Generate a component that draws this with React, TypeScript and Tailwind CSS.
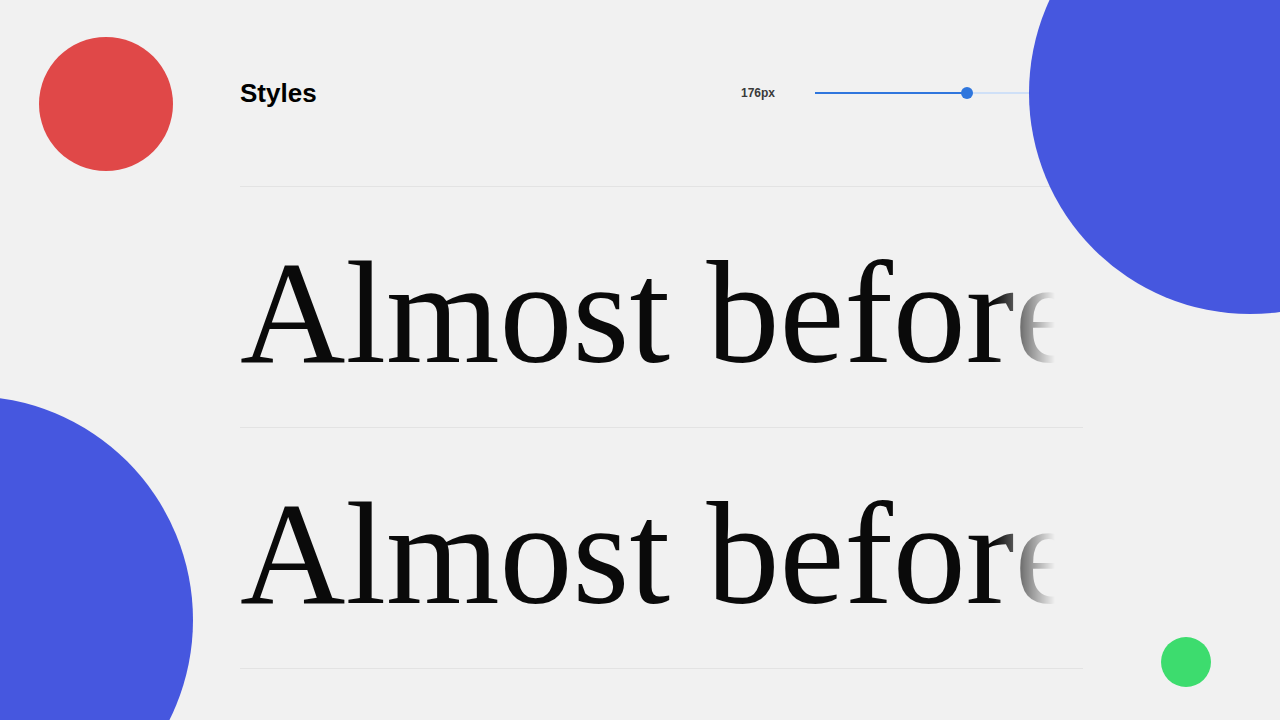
import React from 'react'

const serif = { fontFamily: '"Liberation Serif", "DejaVu Serif", serif' }

function Slider({ value }: { value: number }) {
  // value is a 0..1 fraction of the track
  return (
    <div className="relative h-[2px] w-[268px] bg-[#cfe0f7]">
      <div className="absolute left-0 top-0 h-[2px] bg-[#2f76dd]" style={{ width: `${value * 100}%` }} />
      <div
        className="absolute top-1/2 h-3 w-3 -translate-x-1/2 -translate-y-1/2 rounded-full bg-[#2f76dd]"
        style={{ left: `${value * 100}%` }}
      />
    </div>
  )
}

function SampleRow({ text }: { text: string }) {
  return (
    <div className="h-[241px] border-b border-[#e3e3e3] pt-[53px]">
      <div
        className="w-[815px] overflow-hidden whitespace-nowrap text-[146px] leading-none text-[#0a0a0a] [mask-image:linear-gradient(to_right,black_92.5%,transparent_100%)]"
        style={serif}
      >
        {text}
      </div>
    </div>
  )
}

export default function App() {
  return (
    <div
      className="relative h-[720px] w-[1280px] overflow-hidden bg-[#f1f1f1]"
      style={{ fontFamily: '"Liberation Sans", Arial, sans-serif' }}
    >
      <div className="ml-[240px] w-[843px]">
        <div className="flex h-[187px] items-center border-b border-[#e3e3e3]">
          <h1 className="text-[26px] font-bold text-black">Styles</h1>
          <div className="flex-1" />
          <span className="text-[12px] font-bold text-[#3a3a3a]">176px</span>
          <div className="ml-[40px]">
            <Slider value={152 / 268} />
          </div>
        </div>
        <SampleRow text="Almost before" />
        <SampleRow text="Almost before" />
      </div>

      {/* decorative circles */}
      <div className="absolute left-[39px] top-[37px] h-[134px] w-[134px] rounded-full bg-[#e04848]" />
      <div className="absolute left-[1029px] top-[-128px] h-[442px] w-[442px] rounded-full bg-[#4657df]" />
      <div className="absolute left-[-255px] top-[396px] h-[448px] w-[448px] rounded-full bg-[#4657df]" />
      <div className="absolute left-[1161px] top-[637px] h-[50px] w-[50px] rounded-full bg-[#3ddc6e]" />
    </div>
  )
}
